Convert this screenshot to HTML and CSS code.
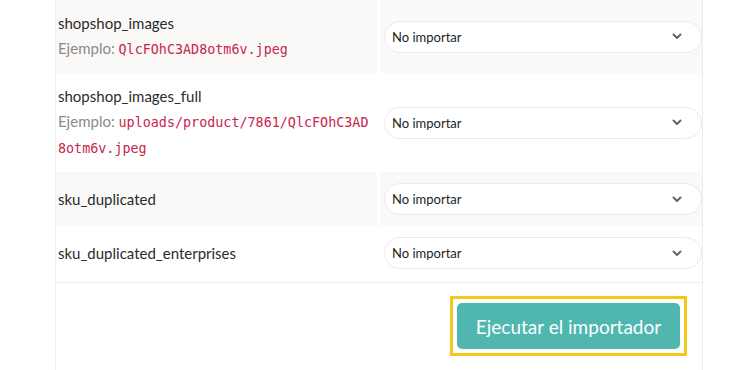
FILE: index.html
```html
<!DOCTYPE html>
<html lang="es">
  <head>
    <meta charset="UTF-8" />
    <meta name="viewport" content="width=device-width, initial-scale=1.0" />
    <title>Importador</title>
    <link rel="stylesheet" href="styles.css">
  </head>
  <body>
    <div class="import-panel">
      <table class="map-table">
        <tbody>
          <tr class="striped">
            <td class="field-cell">
              <div class="field-name">shopshop_images</div>
              <div class="field-example">Ejemplo: <code>QlcFOhC3AD8otm6v.jpeg</code></div>
            </td>
            <td class="select-cell">
              <div class="fake-select">
                <span>No importar</span>
                <svg width="10" height="7" viewBox="0 0 10 7"><path d="M1.5 1.5 L5 5 L8.5 1.5" fill="none" stroke="#666" stroke-width="2" stroke-linecap="round" stroke-linejoin="round"/></svg>
              </div>
            </td>
          </tr>
          <tr>
            <td class="field-cell">
              <div class="field-name">shopshop_images_full</div>
              <div class="field-example">Ejemplo: <code>uploads/product/7861/QlcFOhC3AD8otm6v.jpeg</code></div>
            </td>
            <td class="select-cell">
              <div class="fake-select">
                <span>No importar</span>
                <svg width="10" height="7" viewBox="0 0 10 7"><path d="M1.5 1.5 L5 5 L8.5 1.5" fill="none" stroke="#666" stroke-width="2" stroke-linecap="round" stroke-linejoin="round"/></svg>
              </div>
            </td>
          </tr>
          <tr class="striped">
            <td class="field-cell">
              <div class="field-name">sku_duplicated</div>
            </td>
            <td class="select-cell">
              <div class="fake-select">
                <span>No importar</span>
                <svg width="10" height="7" viewBox="0 0 10 7"><path d="M1.5 1.5 L5 5 L8.5 1.5" fill="none" stroke="#666" stroke-width="2" stroke-linecap="round" stroke-linejoin="round"/></svg>
              </div>
            </td>
          </tr>
          <tr>
            <td class="field-cell">
              <div class="field-name">sku_duplicated_enterprises</div>
            </td>
            <td class="select-cell">
              <div class="fake-select">
                <span>No importar</span>
                <svg width="10" height="7" viewBox="0 0 10 7"><path d="M1.5 1.5 L5 5 L8.5 1.5" fill="none" stroke="#666" stroke-width="2" stroke-linecap="round" stroke-linejoin="round"/></svg>
              </div>
            </td>
          </tr>
        </tbody>
      </table>

      <div class="panel-footer">
        <span class="focus-ring">
          <button class="run-button" type="button">Ejecutar el importador</button>
        </span>
      </div>
    </div>
  </body>
</html>
```

FILE: styles.css
```css
body {
  margin: 0;
  background-color: #fff;
  font-family: Lato, "Noto Sans", sans-serif;
  color: #2b2b2b;
}

.import-panel {
  margin-left: 55px;
  width: 646px;
  border-left: 1px solid #ececec;
  border-right: 1px solid #ececec;
  min-height: 370px;
}

.map-table {
  width: 100%;
  border-collapse: separate;
  border-spacing: 0;
  table-layout: fixed;
}

.map-table td {
  vertical-align: middle;
  padding: 11px 0;
}

.map-table tr:last-child td {
  padding-bottom: 13px;
}

.striped td {
  background-color: #faf9f7;
}

.field-cell {
  width: 313px;
  padding-left: 2px !important;
  padding-right: 6px !important;
  border-right: 3px solid #fff;
}

.select-cell {
  padding-left: 4px !important;
  padding-right: 0 !important;
}

.field-name {
  font-size: 15px;
  line-height: 25px;
}

.field-example {
  font-size: 15px;
  line-height: 25px;
  color: #8a8a8a;
  word-break: break-all;
}

.field-example code {
  font-family: "DejaVu Sans Mono", "Liberation Mono", monospace;
  font-size: 13.4px;
  color: #c7254e;
}

.fake-select {
  display: flex;
  align-items: center;
  justify-content: space-between;
  height: 32px;
  box-sizing: border-box;
  padding: 0 19px 0 7px;
  background-color: #fff;
  border: 1px solid #ebebeb;
  border-radius: 16px;
  font-size: 13px;
  color: #1e1e1e;
}

.panel-footer {
  display: flex;
  justify-content: flex-end;
  border-top: 1px solid #ececec;
  padding: 13px 15px 20px 0;
}

.focus-ring {
  display: flex;
  padding: 4px;
  border: 3px solid #f6c719;
}

.run-button {
  font-family: Lato, "Noto Sans", sans-serif;
  font-size: 19px;
  color: #fff;
  background-color: #4fb7b0;
  border: none;
  border-radius: 5px;
  height: 46px;
  width: 223px;
  cursor: pointer;
}
```
